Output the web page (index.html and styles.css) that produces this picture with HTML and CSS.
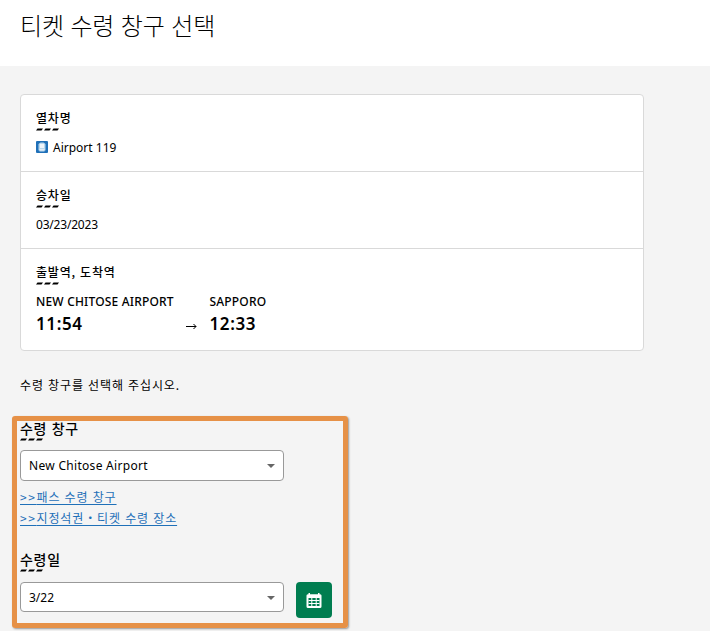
FILE: index.html
```html
<!DOCTYPE html>
<html lang="ko">
<head>
<meta charset="utf-8">
<title>티켓 수령 창구 선택</title>
<link rel="stylesheet" href="styles.css">
</head>
<body>
<header class="page-header"><h1>티켓 수령 창구 선택</h1></header>
<main>
  <section class="card">
    <div class="row">
      <h2 class="label">열차명</h2>
      <svg class="dashes" viewBox="0 0 24 3"><path d="M1.500 .5H7L5.500 2.500H0zM9.500 .5H15L13.500 2.500H8zM17.500 .5H23L21.500 2.500H16z"/></svg>
      <p class="value train">
        <svg class="train-icon" viewBox="0 0 12 12"><rect width="12" height="12" rx="1" fill="#1f70b8"/><path d="M4.500 1.500h3L9.500 3v6.500H8.500v1h-5v-1h-1V3z" fill="#b9d8ee"/><path d="M4 3h4v4H4z" fill="#eef5fa"/><path d="M3.500 8h5v1.500h-5z" fill="#e0edf6"/></svg>
        <span>Airport 119</span>
      </p>
    </div>
    <div class="row">
      <h2 class="label">승차일</h2>
      <svg class="dashes" viewBox="0 0 24 3"><path d="M1.500 .5H7L5.500 2.500H0zM9.500 .5H15L13.500 2.500H8zM17.500 .5H23L21.500 2.500H16z"/></svg>
      <p class="value date">03/23/2023</p>
    </div>
    <div class="row route-row">
      <h2 class="label">출발역, 도착역</h2>
      <svg class="dashes" viewBox="0 0 24 3"><path d="M1.500 .5H7L5.500 2.500H0zM9.500 .5H15L13.500 2.500H8zM17.500 .5H23L21.500 2.500H16z"/></svg>
      <div class="route">
        <div class="stop origin"><span class="station">NEW CHITOSE AIRPORT</span><span class="time">11:54</span></div>
        <svg class="arrow" viewBox="0 0 11 7"><path d="M0 3.500H10M7.500 1L10 3.500L7.500 6" fill="none" stroke="#000"/></svg>
        <div class="stop"><span class="station">SAPPORO</span><span class="time">12:33</span></div>
      </div>
    </div>
  </section>
  <p class="message">수령 창구를 선택해 주십시오.</p>
  <section class="pickup">
    <h2 class="field-title">수령 창구</h2>
    <svg class="dashes" viewBox="0 0 24 3"><path d="M1.500 .5H7L5.500 2.500H0zM9.500 .5H15L13.500 2.500H8zM17.500 .5H23L21.500 2.500H16z"/></svg>
    <div class="select office"><span>New Chitose Airport</span><i class="caret"></i></div>
    <nav class="links">
      <a href="#"><span class="marks">&gt;&gt;</span>패스 수령 창구</a>
      <a href="#"><span class="marks">&gt;&gt;</span>지정석권・티켓 수령 장소</a>
    </nav>
    <h2 class="field-title">수령일</h2>
    <svg class="dashes" viewBox="0 0 24 3"><path d="M1.500 .5H7L5.500 2.500H0zM9.500 .5H15L13.500 2.500H8zM17.500 .5H23L21.500 2.500H16z"/></svg>
    <div class="date-line">
      <div class="select day"><span>3/22</span><i class="caret"></i></div>
      <button class="calendar" type="button" aria-label="달력">
        <svg viewBox="0 0 16 16"><path fill="#fff" fill-rule="evenodd" d="M2.500 1.200V0h1.500v1.200h8V0h1.500v1.200Q15.500 1.200 15.500 2.500V13.500Q15.500 15 14 15H2Q.5 15 .5 13.500V2.500Q.5 1.200 2.500 1.200zM2.500 5v8h11V5z"/><path fill="#fff" d="M5.300 5h1v8h-1zM9.700 5h1v8h-1zM2.500 7h11v1h-11zM2.500 10h11v1h-11z"/></svg>
      </button>
    </div>
  </section>
</main>
</body>
</html>
```

FILE: styles.css
```css
* { box-sizing: border-box; }
body {
  margin: 0;
  height: 631px;
  overflow: hidden;
  background: #f4f4f4;
  color: #000;
  font: 12px/18px "Noto Sans", "Noto Sans CJK KR", sans-serif;
}
h1, h2, p { margin: 0; white-space: nowrap; }
.page-header { height: 66px; padding: 8px 20px; background: #fff; }
h1 { font-size: 24px; line-height: 34px; font-weight: 300; font-family: "Noto Sans CJK KR", sans-serif; letter-spacing: -.15px; }
main { padding: 28px 20px 0; }
.card {
  width: 624px;
  height: 257px;
  background: #fff;
  border: 1px solid #d9d9d9;
  border-radius: 4px;
}
.row { height: 77px; padding: 14px 15px 0; border-bottom: 1px solid #d9d9d9; }
.route-row { height: 101px; border-bottom: 0; }
.label { font-size: 12px; line-height: 18px; font-weight: 500; font-family: "Noto Sans CJK KR", sans-serif; letter-spacing: .8px; }
.dashes { display: block; width: 24px; height: 3px; margin-top: 1px; }
.value { margin-top: 7px; line-height: 20px; }
.train { display: flex; align-items: center; gap: 5px; }
.train-icon { width: 12px; height: 12px; margin-top: -2px; }
.date { letter-spacing: -.2px; }
.route { display: flex; margin-top: 7px; }
.stop { display: flex; flex-direction: column; }
.origin { width: 149.500px; }
.station { line-height: 20px; font-weight: 500; letter-spacing: .18px; }
.time { font-size: 17px; line-height: 24px; font-weight: 600; letter-spacing: .6px; }
.arrow { width: 11px; height: 7px; margin: 31px 13px 0 0; }
.message { margin-top: 25px; line-height: 18px; font-family: "Noto Sans CJK KR", sans-serif; letter-spacing: .88px; }
.pickup {
  width: 336px;
  height: 212px;
  margin: 22px 0 0 -8px;
  padding: 0 3px;
  border: 5px solid #e69147;
  border-radius: 3px;
  box-shadow: 1px 1px 2px #999;
}
.field-title { font-size: 14px; line-height: 18px; font-weight: 500; font-family: "Noto Sans CJK KR", sans-serif; letter-spacing: .7px; margin-top: -2px; }
.pickup .dashes { margin-top: 1px; }
.select {
  display: flex;
  align-items: center;
  justify-content: space-between;
  width: 264px;
  height: 30px;
  padding: 0 8px;
  background: #fff;
  border: 1px solid #999;
  border-radius: 4px;
}
.office { height: 31px; margin-top: 9px; letter-spacing: .3px; }
.day { padding-top: 1px; }
.caret { border: 4px solid transparent; border-top-color: #666; border-bottom: 0; }
.links { display: flex; flex-direction: column; align-items: flex-start; margin-top: 5px; }
.links a { color: #1f70b8; line-height: 21px; font-family: "Noto Sans CJK KR", sans-serif; white-space: nowrap; text-underline-offset: 2px; letter-spacing: .88px; }
.links .marks { letter-spacing: 1.600px; }
.links + .field-title { margin-top: 22px; }
.date-line { display: flex; gap: 12px; margin-top: 10px; }
.calendar { display: flex; align-items: center; justify-content: center; width: 36px; height: 36px; padding: 2px 0 0; border: 0; border-radius: 4px; background: #007d50; }
.calendar svg { width: 16px; height: 16px; }
```
